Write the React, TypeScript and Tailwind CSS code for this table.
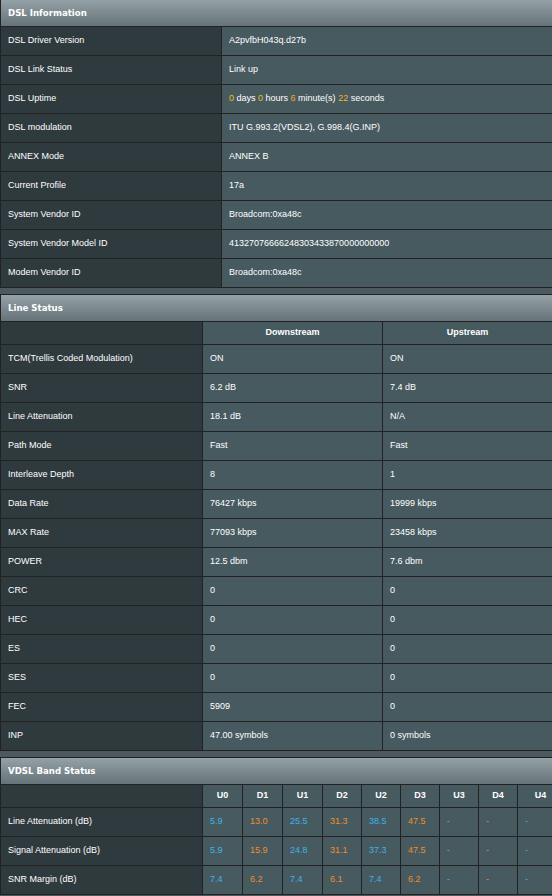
const BLUE = "text-[#3ab4ec]";
const ORANGE = "text-[#f08c2e]";

const dslInfo: [string, React.ReactNode][] = [
  ["DSL Driver Version", "A2pvfbH043q.d27b"],
  ["DSL Link Status", "Link up"],
  [
    "DSL Uptime",
    <span>
      <span className="text-[#e6c319]">0</span> days{" "}
      <span className="text-[#e6c319]">0</span> hours{" "}
      <span className="text-[#f5a623]">6</span> minute(s){" "}
      <span className="text-[#f5b02a]">22</span> seconds
    </span>,
  ],
  ["DSL modulation", "ITU G.993.2(VDSL2), G.998.4(G.INP)"],
  ["ANNEX Mode", "ANNEX B"],
  ["Current Profile", "17a"],
  ["System Vendor ID", "Broadcom:0xa48c"],
  ["System Vendor Model ID", "41327076666248303433870000000000"],
  ["Modem Vendor ID", "Broadcom:0xa48c"],
];

const lineStatus: [string, string, string][] = [
  ["TCM(Trellis Coded Modulation)", "ON", "ON"],
  ["SNR", "6.2 dB", "7.4 dB"],
  ["Line Attenuation", "18.1 dB", "N/A"],
  ["Path Mode", "Fast", "Fast"],
  ["Interleave Depth", "8", "1"],
  ["Data Rate", "76427 kbps", "19999 kbps"],
  ["MAX Rate", "77093 kbps", "23458 kbps"],
  ["POWER", "12.5 dbm", "7.6 dbm"],
  ["CRC", "0", "0"],
  ["HEC", "0", "0"],
  ["ES", "0", "0"],
  ["SES", "0", "0"],
  ["FEC", "5909", "0"],
  ["INP", "47.00 symbols", "0 symbols"],
];

const bands = [
  { name: "U0", w: "w-[40px]" },
  { name: "D1", w: "w-[40px]" },
  { name: "U1", w: "w-[40px]" },
  { name: "D2", w: "w-[39px]" },
  { name: "U2", w: "w-[39px]" },
  { name: "D3", w: "w-[39px]" },
  { name: "U3", w: "w-[39px]" },
  { name: "D4", w: "w-[39px]" },
  { name: "U4", w: "w-[46px]" },
];

const bandRows: [string, string[]][] = [
  ["Line Attenuation (dB)", ["5.9", "13.0", "25.5", "31.3", "38.5", "47.5", "-", "-", "-"]],
  ["Signal Attenuation (dB)", ["5.9", "15.9", "24.8", "31.1", "37.3", "47.5", "-", "-", "-"]],
  ["SNR Margin (dB)", ["7.4", "6.2", "7.4", "6.1", "7.4", "6.2", "-", "-", "-"]],
];

function SectionHeader({ title }: { title: string }) {
  return (
    <div className="h-[27px] border-b border-[#222] bg-linear-to-b from-[#94a1a6] to-[#66747a] flex items-center pl-[7px] text-white font-bold text-[8.6px] font-['DejaVu_Sans',sans-serif]">
      {title}
    </div>
  );
}

function App() {
  return (
    <div className="w-[552px] h-[896px] overflow-hidden bg-[#4d595d] font-['Liberation_Sans',Arial,sans-serif] text-[9px] text-white">
      <div className="-mt-px flex flex-col gap-[6px] w-[600px]">
        {/* DSL Information */}
        <div className="border-t border-l border-[#222]">
          <SectionHeader title="DSL Information" />
          {dslInfo.map(([label, value]) => (
            <div key={label} className="flex h-[29px] border-b border-[#222]">
              <div className="w-[221px] shrink-0 border-r border-[#222] bg-[#2f3a3e] flex items-center pl-[7px]">
                {label}
              </div>
              <div className="flex-1 bg-[#475a5f] flex items-center pl-[7px]">
                {value}
              </div>
            </div>
          ))}
        </div>

        {/* Line Status */}
        <div className="border-t border-l border-[#222]">
          <SectionHeader title="Line Status" />
          <div className="flex h-[23px] border-b border-[#222] font-bold">
            <div className="w-[202px] shrink-0 border-r border-[#222] bg-[#2f3a3e]" />
            <div className="w-[180px] shrink-0 border-r border-[#222] bg-[#475a5f] flex items-center justify-center">
              Downstream
            </div>
            <div className="w-[170px] shrink-0 border-r border-[#222] bg-[#475a5f] flex items-center justify-center">
              Upstream
            </div>
            <div className="flex-1 bg-[#475a5f]" />
          </div>
          {lineStatus.map(([label, down, up]) => (
            <div key={label} className="flex h-[29px] border-b border-[#222]">
              <div className="w-[202px] shrink-0 border-r border-[#222] bg-[#2f3a3e] flex items-center pl-[7px]">
                {label}
              </div>
              <div className="w-[180px] shrink-0 border-r border-[#222] bg-[#475a5f] flex items-center pl-[7px]">
                {down}
              </div>
              <div className="w-[170px] shrink-0 border-r border-[#222] bg-[#475a5f] flex items-center pl-[7px]">
                {up}
              </div>
              <div className="flex-1 bg-[#475a5f]" />
            </div>
          ))}
        </div>

        {/* VDSL Band Status */}
        <div className="border-t border-l border-[#222]">
          <SectionHeader title="VDSL Band Status" />
          <div className="flex h-[23px] border-b border-[#222] font-bold">
            <div className="w-[202px] shrink-0 border-r border-[#222] bg-[#2f3a3e]" />
            {bands.map((b) => (
              <div
                key={b.name}
                className={`${b.w} shrink-0 border-r border-[#222] bg-[#475a5f] flex items-center justify-center`}
              >
                {b.name}
              </div>
            ))}
            <div className="flex-1 bg-[#475a5f]" />
          </div>
          {bandRows.map(([label, values]) => (
            <div key={label} className="flex h-[29px] border-b border-[#222]">
              <div className="w-[202px] shrink-0 border-r border-[#222] bg-[#2f3a3e] flex items-center pl-[7px]">
                {label}
              </div>
              {values.map((v, i) => (
                <div
                  key={i}
                  className={`${bands[i].w} shrink-0 border-r border-[#222] bg-[#475a5f] flex items-center pl-[7px] ${
                    bands[i].name.startsWith("U") ? BLUE : ORANGE
                  }`}
                >
                  {v}
                </div>
              ))}
              <div className="flex-1 bg-[#475a5f]" />
            </div>
          ))}
        </div>
      </div>
    </div>
  );
}

export default App;
